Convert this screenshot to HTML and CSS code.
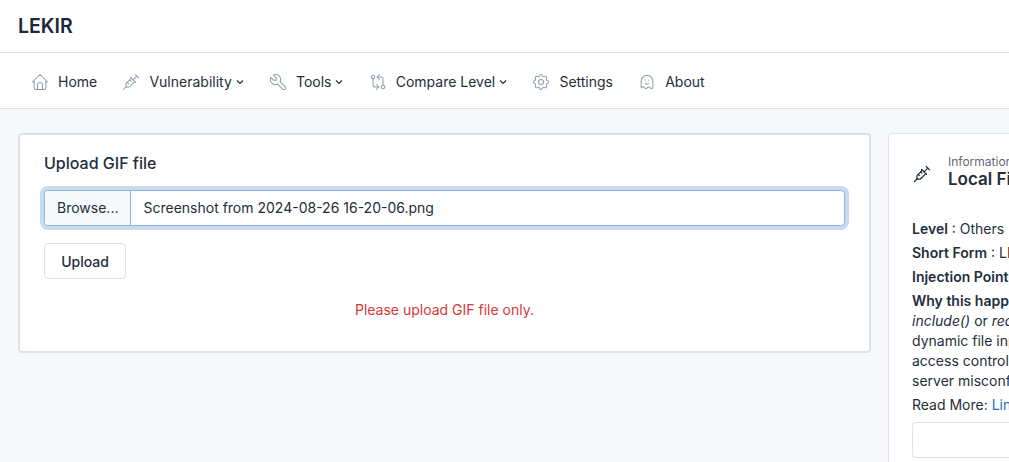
FILE: index.html
```html
<!DOCTYPE html>
<html lang="en">
<head>
    <meta charset="UTF-8">
    <meta name="viewport" content="width=device-width, initial-scale=1.0">
    <title>LEKIR</title>
    <link rel="stylesheet" href="styles.css">
</head>
<body>

    <header class="topbar">
        <span class="brand">LEKIR</span>
    </header>

    <nav class="menu">
        <a class="menu-item" href="#">
            <svg class="menu-icon" viewBox="0 0 24 24"><path d="M5 12H3l9-9 9 9h-2"/><path d="M5 12v7a2 2 0 0 0 2 2h10a2 2 0 0 0 2-2v-7"/><path d="M9 21v-6a2 2 0 0 1 2-2h2a2 2 0 0 1 2 2v6"/></svg>
            Home
        </a>
        <a class="menu-item" href="#">
            <svg class="menu-icon" viewBox="0 0 24 24"><path d="M17 3l4 4"/><path d="M19 5l-4.500 4.500"/><path d="M11.500 6.500l6 6"/><path d="M16.500 11.500L10 18H6v-4l6.500-6.500"/><path d="M7.500 12.500l1.500 1.500"/><path d="M10.500 9.500l1.500 1.500"/><path d="M3 21l3-3"/></svg>
            Vulnerability
            <svg class="caret" viewBox="0 0 8 8"><path d="M1 2.500l3 3 3-3"/></svg>
        </a>
        <a class="menu-item" href="#">
            <svg class="menu-icon" viewBox="0 0 24 24"><path d="M7 10h3V7L6.500 3.500a6 6 0 0 1 8 8l6 6a2 2 0 0 1-3 3l-6-6a6 6 0 0 1-8-8L7 10"/></svg>
            Tools
            <svg class="caret" viewBox="0 0 8 8"><path d="M1 2.500l3 3 3-3"/></svg>
        </a>
        <a class="menu-item" href="#">
            <svg class="menu-icon" viewBox="0 0 24 24"><circle cx="6" cy="6" r="2"/><circle cx="18" cy="18" r="2"/><path d="M11 6h5a2 2 0 0 1 2 2v8"/><path d="M14 9l-3-3 3-3"/><path d="M13 18H8a2 2 0 0 1-2-2V8"/><path d="M10 15l3 3-3 3"/></svg>
            Compare Level
            <svg class="caret" viewBox="0 0 8 8"><path d="M1 2.500l3 3 3-3"/></svg>
        </a>
        <a class="menu-item" href="#">
            <svg class="menu-icon" viewBox="0 0 24 24"><path d="M10.300 4.300c.4-1.800 3-1.800 3.400 0a1.700 1.700 0 0 0 2.600 1.100c1.500-.9 3.300.8 2.400 2.400a1.700 1.700 0 0 0 1 2.500c1.800.4 1.800 3 0 3.400a1.700 1.700 0 0 0-1 2.600c.9 1.500-.9 3.300-2.400 2.400a1.700 1.700 0 0 0-2.600 1c-.4 1.800-3 1.800-3.400 0a1.700 1.700 0 0 0-2.600-1c-1.500.9-3.300-.9-2.400-2.400a1.700 1.700 0 0 0-1-2.600c-1.800-.4-1.800-3 0-3.400a1.700 1.700 0 0 0 1-2.500c-.9-1.600.9-3.300 2.400-2.400 1 .6 2.300.1 2.600-1.100z"/><circle cx="12" cy="12" r="3"/></svg>
            Settings
        </a>
        <a class="menu-item" href="#">
            <svg class="menu-icon" viewBox="0 0 24 24"><path d="M5 11a7 7 0 0 1 14 0v7a1.800 1.800 0 0 1-3.300 1 1.900 1.900 0 0 0-3.400 0 1.900 1.900 0 0 1-3.400 0 1.800 1.800 0 0 0-3.400 0A1.800 1.800 0 0 1 5 18v-7"/><path d="M10 10h.01"/><path d="M14 10h.01"/><path d="M10 14a3.500 3.500 0 0 0 4 0"/></svg>
            About
        </a>
    </nav>

    <main class="content">
        <section class="card upload-card">
            <h3 class="card-title">Upload GIF file</h3>
            <div class="file-input">
                <span class="file-browse">Browse...</span>
                <span class="file-name">Screenshot from 2024-08-26 16-20-06.png</span>
            </div>
            <button class="btn" type="button">Upload</button>
            <p class="error-text">Please upload GIF file only.</p>
        </section>

        <aside class="card info-card">
            <div class="info-head">
                <svg class="info-icon" viewBox="0 0 24 24"><path d="M17 3l4 4"/><path d="M19 5l-4.500 4.500"/><path d="M11.500 6.500l6 6"/><path d="M16.500 11.500L10 18H6v-4l6.500-6.500"/><path d="M7.500 12.500l1.500 1.500"/><path d="M10.500 9.500l1.500 1.500"/><path d="M3 21l3-3"/></svg>
                <div>
                    <div class="info-label">Information</div>
                    <div class="info-title">Local File Inclusion</div>
                </div>
            </div>
            <p class="info-line"><b>Level</b> : Others</p>
            <p class="info-line"><b>Short Form</b> : LFI</p>
            <p class="info-line"><b>Injection Point</b> : File upload</p>
            <p class="info-why">
                <b>Why this happens?</b><br>
                <i>include()</i> or <i>require()</i> used with<br>
                dynamic file input and no checks,<br>
                access control missing, or a web<br>
                server misconfiguration.
            </p>
            <p class="info-line">Read More: <a class="info-link" href="#">Link</a></p>
            <div class="info-box"></div>
        </aside>
    </main>

</body>
</html>
```

FILE: styles.css
```css
* {
    box-sizing: border-box;
}
html, body {
    height: 100%;
}
body {
    margin: 0;
    overflow: hidden;
    background-color: #f6f8fb;
    color: #232e3c;
    font-family: "Inter", "Liberation Sans", sans-serif;
    font-size: 14px;
    line-height: 20px;
}
.topbar {
    height: 53px;
    padding: 0 18px;
    display: flex;
    align-items: center;
    background-color: #fff;
    border-bottom: 1px solid #dce1e7;
}
.brand {
    color: #1d273b;
    font-size: 19.5px;
    font-weight: 600;
}
.menu {
    height: 56px;
    padding: 2px 29px 0;
    display: flex;
    align-items: center;
    gap: 23.2px;
    background-color: #fff;
    border-bottom: 1px solid #dce1e7;
}
.menu-item {
    display: flex;
    align-items: center;
    color: #232e3c;
    text-decoration: none;
}
.menu-icon {
    width: 20px;
    height: 20px;
    margin: 0 8px 0 1px;
    fill: none;
    stroke: #8f9bb0;
    stroke-width: 1.25;
    stroke-linecap: round;
    stroke-linejoin: round;
}
.caret {
    width: 8px;
    height: 8px;
    margin-left: 4px;
    fill: none;
    stroke: #232e3c;
    stroke-width: 1.2;
}
.content {
    width: 1300px;
    padding: 24px 18px;
    display: flex;
    align-items: flex-start;
    gap: 17px;
}
.card {
    background-color: #fff;
    border: 1px solid #dce1e7;
    border-radius: 4px;
}
.upload-card {
    width: 853px;
    height: 220px;
    padding: 18px 24px;
    border-width: 2px;
    flex-shrink: 0;
}
.card-title {
    margin: 0 0 17px;
    font-size: 16px;
    line-height: 20px;
    font-weight: 500;
}
.file-input {
    display: flex;
    height: 36px;
    background-color: #fff;
    border: 1px solid #90b5e2;
    border-radius: 4px;
    box-shadow: 0 0 0 4px #c8daf0;
    overflow: hidden;
}
.file-browse {
    padding: 0 12px;
    display: flex;
    align-items: center;
    background-color: #f6f8fb;
    border-right: 1px solid #90b5e2;
}
.file-name {
    padding: 0 12px;
    display: flex;
    align-items: center;
}
.btn {
    display: block;
    height: 36px;
    width: 82px;
    margin-top: 17px;
    padding: 1px 0 0;
    color: #232e3c;
    background-color: #fff;
    border: 1px solid #dce1e7;
    border-radius: 4px;
    font: 450 14px/20px "Inter", "Liberation Sans", sans-serif;
}
.error-text {
    margin: 21px 0 0;
    text-align: center;
    color: #d63939;
}
.info-card {
    width: 400px;
    height: 500px;
    padding: 21px 23px;
    flex-shrink: 0;
}
.info-head {
    display: flex;
    align-items: center;
    gap: 16px;
    margin-bottom: 30px;
}
.info-icon {
    width: 20px;
    height: 20px;
    margin-top: 3px;
    fill: none;
    stroke: #232e3c;
    stroke-width: 1.5;
    stroke-linecap: round;
    stroke-linejoin: round;
}
.info-label {
    color: #626976;
    font-size: 12px;
    line-height: 14px;
}
.info-title {
    font-size: 17px;
    line-height: 20px;
    font-weight: 600;
}
.info-line {
    margin: 0 0 4px;
}
.info-line b, .info-why b {
    font-weight: 600;
}
.info-why {
    margin: 0 0 4px;
}
.info-link {
    color: #206bc4;
    text-decoration: none;
}
.info-box {
    height: 36px;
    margin-top: 7px;
    border: 1px solid #dce1e7;
    border-radius: 4px;
}
```
